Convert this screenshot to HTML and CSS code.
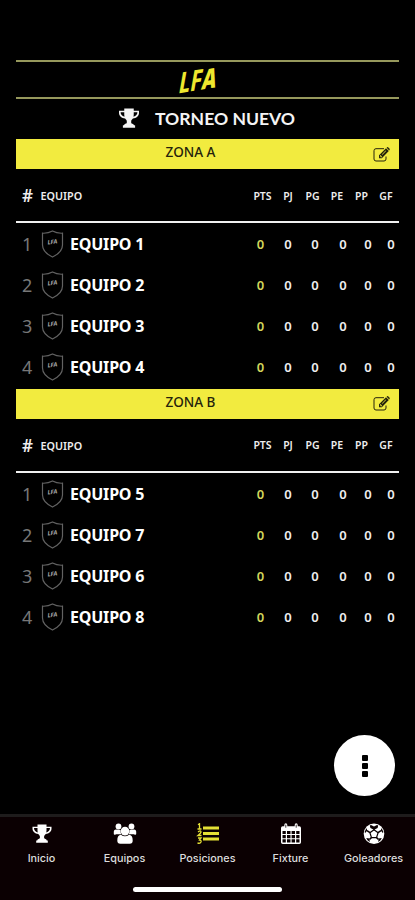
FILE: index.html
```html
<!DOCTYPE html>
<html lang="es">
<head>
<meta charset="utf-8">
<title>LFA</title>
<link rel="stylesheet" href="styles.css">
</head>
<body>
<svg class="defs" width="0" height="0">
  <symbol id="trophy" viewBox="0 0 20 19">
    <path d="M5.5 0.5h9v2.200h5v2c0 2.800-2.600 5-5.800 5.300-.8 1.100-1.400 1.400-1.600 2.400v1.500c0 1 2.700 1 2.700 2.500h1v2.400H4.200v-2.400h1c0-1.500 2.700-1.500 2.700-2.500v-1.500C7.700 11.400 7.100 11.100 6.300 10 3.100 9.700.5 7.500.5 4.700v-2h5zM5.500 4.100H2c0 2.100 1.400 3.700 3.700 4.300C5.400 7 5.500 5.500 5.500 4.100zM14.500 4.100c0 1.400.1 2.900-.2 4.300C16.600 7.800 18 6.200 18 4.100z" fill="currentColor" fill-rule="evenodd"/>
  </symbol>
  <symbol id="edit" viewBox="0 0 17 15">
    <path d="M11 1.700H3Q1 1.700 1 3.700v8.300Q1 14 3 14H11q2 0 2-2V9.500" fill="none" stroke="currentColor" stroke-width="1"/>
    <path d="M6 11.200V8.300L13 1.300 15.800 4.100 8.800 11.200zM13.600.7l.5-.4q.5-.4 1 0l1.500 1.500q.4.500 0 1l-.4.600zM7 8.700v.9h.8v.8h.6l.6-.6L7.600 8.100zM8.800 7.400l.5.300 3.700-3.800-.4-.3z" fill="currentColor" fill-rule="evenodd"/>
  </symbol>
  <symbol id="shield" viewBox="0 0 22 28">
    <path d="M11 1Q6.500 3.500 1 3.200V15c0 6 4.500 9.300 10 12 5.500-2.700 10-6 10-12V3.200Q15.500 3.500 11 1z" fill="none" stroke="#626262" stroke-width="1.200"/>
    <text x="11" y="14" text-anchor="middle" class="shield-text" transform="rotate(-7 11 13)">LFA</text>
  </symbol>
</svg>
<main class="page">
  <header class="brand"><span class="logo">L<i>F</i><b>A</b></span></header>
  <h1 class="title"><svg class="title-icon"><use href="#trophy"/></svg><span>TORNEO NUEVO</span></h1>

  <section class="zone">
    <div class="zone-bar"><span>ZONA A</span><svg class="edit"><use href="#edit"/></svg></div>
    <div class="head"><span class="team-head"><b>#</b>EQUIPO</span><span>PTS</span><span>PJ</span><span>PG</span><span>PE</span><span>PP</span><span>GF</span></div>
    <div class="row"><span class="team"><i>1</i><svg class="crest"><use href="#shield"/></svg><b>EQUIPO 1</b></span><span class="pts">0</span><span>0</span><span>0</span><span>0</span><span>0</span><span>0</span></div>
    <div class="row"><span class="team"><i>2</i><svg class="crest"><use href="#shield"/></svg><b>EQUIPO 2</b></span><span class="pts">0</span><span>0</span><span>0</span><span>0</span><span>0</span><span>0</span></div>
    <div class="row"><span class="team"><i>3</i><svg class="crest"><use href="#shield"/></svg><b>EQUIPO 3</b></span><span class="pts">0</span><span>0</span><span>0</span><span>0</span><span>0</span><span>0</span></div>
    <div class="row"><span class="team"><i>4</i><svg class="crest"><use href="#shield"/></svg><b>EQUIPO 4</b></span><span class="pts">0</span><span>0</span><span>0</span><span>0</span><span>0</span><span>0</span></div>
  </section>

  <section class="zone">
    <div class="zone-bar"><span>ZONA B</span><svg class="edit"><use href="#edit"/></svg></div>
    <div class="head"><span class="team-head"><b>#</b>EQUIPO</span><span>PTS</span><span>PJ</span><span>PG</span><span>PE</span><span>PP</span><span>GF</span></div>
    <div class="row"><span class="team"><i>1</i><svg class="crest"><use href="#shield"/></svg><b>EQUIPO 5</b></span><span class="pts">0</span><span>0</span><span>0</span><span>0</span><span>0</span><span>0</span></div>
    <div class="row"><span class="team"><i>2</i><svg class="crest"><use href="#shield"/></svg><b>EQUIPO 7</b></span><span class="pts">0</span><span>0</span><span>0</span><span>0</span><span>0</span><span>0</span></div>
    <div class="row"><span class="team"><i>3</i><svg class="crest"><use href="#shield"/></svg><b>EQUIPO 6</b></span><span class="pts">0</span><span>0</span><span>0</span><span>0</span><span>0</span><span>0</span></div>
    <div class="row"><span class="team"><i>4</i><svg class="crest"><use href="#shield"/></svg><b>EQUIPO 8</b></span><span class="pts">0</span><span>0</span><span>0</span><span>0</span><span>0</span><span>0</span></div>
  </section>
</main>

<button class="fab" aria-label="Más"><i></i><i></i><i></i></button>

<nav class="tabs">
  <div class="tab-list">
    <a class="tab"><svg class="tab-icon" viewBox="0 0 24 22"><use href="#trophy" x="2" y="1" width="20" height="19"/></svg>Inicio</a>
    <a class="tab"><svg class="tab-icon" viewBox="0 0 24 22" fill="currentColor"><circle cx="5.500" cy="3.500" r="2.900"/><circle cx="18.500" cy="3.500" r="2.900"/><path d="M.8 11V8.500Q1 6.500 3 6.600L7.500 7q-.2 3 1.200 4.300H3Q1 12.500.8 11zM23.200 11V8.500q-.2-2-2.200-1.900L16.500 7q.2 3-1.200 4.300H21q2 1.200 2.200-.3z"/><circle cx="12" cy="8.100" r="4.300"/><path d="M4.300 17.500q0-5.500 3.700-5.700 1.800 1.500 4 1.500t4-1.500q3.700.2 3.700 5.700 0 3.300-3 3.300H7.300q-3 0-3-3.300z"/></svg>Equipos</a>
    <a class="tab active"><svg class="tab-icon" viewBox="0 0 24 22"><g fill="none" stroke="currentColor"><path d="M7 5h16M7 10.500h16M7 16h16" stroke-width="2.800"/><path d="M2 1.700l1.500-1V6M1.500 6h4M2 9q3-2.200 3 0 0 1-3 3.500h3.500M2 15h3l-1.500 2q2 .2 1.500 2-1 2-3.500.8" stroke-width="1.300"/></g></svg>Posiciones</a>
    <a class="tab"><svg class="tab-icon" viewBox="0 0 24 22"><path fill="currentColor" fill-rule="evenodd" d="M2 5q0-1.700 1.700-1.700h1.600V2q0-1.700 1.500-1.700T8.300 2v1.300h7.400V2q0-1.700 1.500-1.700T18.700 2v1.300h1.600Q22 3.300 22 5v14.300q0 1.700-1.700 1.700H3.700Q2 21 2 19.300zM3.500 8v3h3.300V8zM8 8v3h3.500V8zM12.600 8v3H16V8zM17.200 8v3h3.300V8zM3.500 12v3.200h3.300V12zM8 12v3.200h3.500V12zM12.600 12v3.200H16V12zM17.200 12v3.200h3.300V12zM3.500 16.300v3.200h3.300v-3.200zM8 16.300v3.200h3.500v-3.200zM12.600 16.300v3.200H16v-3.200zM17.200 16.300v3.200h3.300v-3.200z"/><path d="M6.800 1.700v3M17.200 1.700v3" stroke="#0b0002" stroke-width=".8"/></svg>Fixture</a>
    <a class="tab"><svg class="tab-icon" viewBox="0 0 24 22"><circle cx="12" cy="10.700" r="10.300" fill="currentColor"/><g fill="#0b0002"><path d="M9 1.900l3 1.600 3-1.600 1.200.6-.6 2.400-3 1.600v1.600h-1.200V6.500l-3-1.600-.6-2.400z"/><path d="M21 10.200l-2.200-2.600.5-2 .5-.2 1.500 3.300zM3 10.200l2.200-2.600-.5-2-.5-.2-1.500 3.300zM16.200 18.900l.4-3.400 3.200-.6-1.300 2.300zM7.800 18.900l-.4-3.400-3.200-.6 1.300 2.300z"/></g><path d="M12 6.700l4.100 3-1.600 4.900h-5L7.900 9.700z" fill="currentColor" stroke="#0b0002" stroke-width="1.200"/><path d="M16 9.700l3-2M14.500 14.500l2 2M9.500 14.500l-2 2M8 9.700l-3-2" stroke="#0b0002" stroke-width="1.600"/></svg>Goleadores</a>
  </div>
  <div class="home"></div>
</nav>
</body>
</html>
```
FILE: styles.css
```css
* { box-sizing: border-box; }
body {
  margin: 0;
  height: 900px;
  overflow: hidden;
  display: flex;
  flex-direction: column;
  background: #000;
  color: #eee;
  font-family: "Noto Sans", sans-serif;
}
.defs { display: none; }
.page { flex: 1; padding: 60px 16px 0; }
.brand {
  height: 39px;
  border-top: 2px solid #96985c;
  border-bottom: 2px solid #96985c;
  display: flex;
  justify-content: center;
  align-items: center;
  padding-right: 20px;
}
.logo {
  font: italic 700 28px/30px "Open Sans", sans-serif;
  color: #eee72e;
  transform: rotate(-9deg) skewX(-10deg) scaleX(.8);
}
.logo b { font-size: 27px; }
.title {
  margin: 0;
  height: 40px;
  display: flex;
  align-items: center;
  padding-left: 102px;
  gap: 15px;
  font: 700 17.600px/40px Lato, sans-serif;
  color: #f4f4f4;
}
.title span { white-space: nowrap; letter-spacing: -.02px; }
.title-icon { width: 22px; height: 20px; margin-top: -3px; }
.zone-bar {
  height: 30px;
  background: #f2eb3f;
  color: #25230b;
  display: grid;
  grid-template-columns: 349px 18px;
  align-items: center;
  font-size: 13.500px;
  font-weight: 500;
  line-height: 26px;
  text-align: center;
}
.zone-bar span { padding-bottom: 4px; }
.edit { width: 17px; height: 15px; margin-left: 8px; }
.head, .row { display: grid; align-items: center; text-align: center; }
.head {
  height: 54px;
  padding-top: 1px;
  border-bottom: 2px solid #f0f0f0;
  grid-template-columns: 234px 25px 26px 23px 26px 23px 26px;
  font-size: 10.500px;
  font-weight: 600;
}
.team-head { display: flex; align-items: center; padding-left: 6px; font-size: 10.800px; }
.team-head b { width: 18.500px; text-align: left; font-size: 17px; font-weight: 600; }
.row {
  height: 41.200px;
  margin-right: -5px;
  grid-template-columns: 231px 27px 28px 26px 30px 20px 26px;
  font-size: 13px;
  font-weight: 600;
}
.zone .row:last-child { height: 42.400px; padding-bottom: 1px; }
.row .pts { color: #d2d65b; }
.team { display: flex; align-items: center; }
.team i { width: 25px; padding-left: 6px; font: 400 18px "Noto Sans", sans-serif; color: #777; text-align: left; }
.team b { margin-left: 6px; font-size: 16px; font-weight: 700; letter-spacing: -.2px; color: #fff; }
.crest { width: 23px; height: 28px; }
.shield-text { font: italic 700 6px "Open Sans", sans-serif; fill: #aaa; }
.fab {
  position: absolute;
  left: 334px;
  top: 735px;
  width: 61px;
  height: 61px;
  border: 0;
  border-radius: 50%;
  background: #fff;
  display: flex;
  flex-direction: column;
  align-items: center;
  justify-content: center;
  gap: 2px;
  padding: 0;
}
.fab i { width: 6px; height: 6px; background: #000; border-radius: 1px; }
.tabs {
  height: 86px;
  border-top: 3px solid #1e1c1c;
  background: #0b0002;
  display: flex;
  flex-direction: column;
  align-items: center;
}
.tab-list { width: 100%; height: 70px; display: grid; grid-template-columns: repeat(5, 1fr); }
.tab {
  display: flex;
  flex-direction: column;
  align-items: center;
  padding-top: 6px;
  gap: 7px;
  font: 500 10.800px/14px Inter, sans-serif;
  color: #ddd;
  white-space: nowrap;
}
.tab-icon { width: 24px; height: 22px; color: #fff; }
.active .tab-icon { color: #e4df35; }
.home { width: 149px; height: 5px; border-radius: 3px; background: #fff; }
```
